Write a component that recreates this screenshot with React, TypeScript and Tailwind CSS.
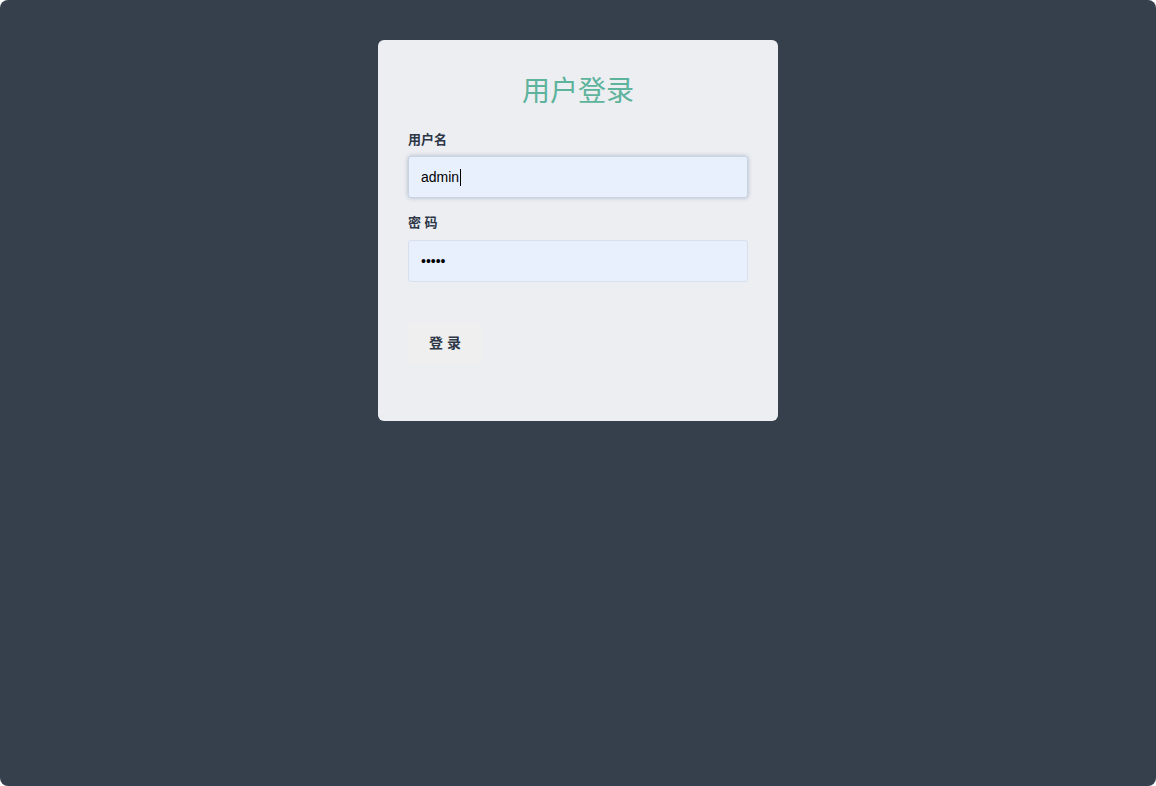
import React from "react";

export default function App() {
  return (
    <div className="w-[1156px] h-[786px] bg-white" style={{ fontFamily: '"Liberation Sans", "Noto Sans CJK SC", sans-serif' }}>
      <div className="w-full h-full bg-[#36404d] rounded-lg pt-10 flex justify-center">
        <div className="w-[400px] h-[381px] bg-[#eceef2] rounded-md px-[30px] pt-[32px]">
          <h1 className="text-center text-[28px] leading-[40px] text-[#5db39b] font-normal">用户登录</h1>
          <div className="mt-[19px]">
            <label className="block text-[13px] leading-[18px] font-bold text-[#2d3748]">用户名</label>
            <div className="mt-[7px] h-[42px] rounded-[3px] bg-[#e8f0fe] border border-[#c9d3e3] shadow-[0_0_4px_rgba(100,120,150,0.45)] flex items-center px-3 text-[14px] text-black">
              admin<span className="w-px h-[17px] bg-black ml-[1px]" />
            </div>
          </div>
          <div className="mt-[16px]">
            <label className="block text-[13px] leading-[18px] font-bold text-[#2d3748]">密 码</label>
            <div className="mt-[8px] h-[42px] rounded-[3px] bg-[#e8f0fe] border border-[#d8e0ec] flex items-center px-3 text-[14px] text-black">
              •••••
            </div>
          </div>
          <button className="mt-[40px] w-[74px] h-[42px] rounded-[3px] bg-[#efeff0] text-[14px] font-bold text-[#2d3748]">登 录</button>
        </div>
      </div>
    </div>
  );
}
